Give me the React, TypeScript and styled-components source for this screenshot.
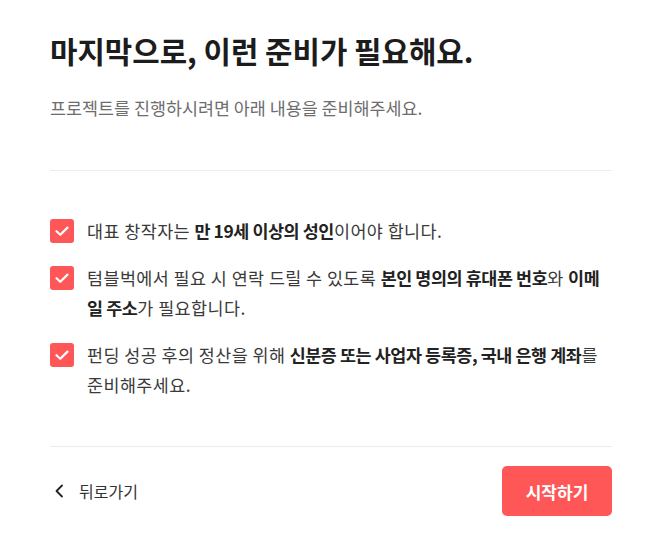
import React from 'react';
import styled, { createGlobalStyle } from 'styled-components';

const GlobalStyle = createGlobalStyle`
  body {
    margin: 0;
    background: #fff;
    font-family: 'Noto Sans CJK KR', 'Noto Sans', sans-serif;
    color: #333;
  }
`;

interface IRequirement {
  parts: { text: string; bold?: boolean }[];
}

const requirements: IRequirement[] = [
  {
    parts: [
      { text: '대표 창작자는 ' },
      { text: '만 19세 이상의 성인', bold: true },
      { text: '이어야 합니다.' },
    ],
  },
  {
    parts: [
      { text: '텀블벅에서 필요 시 연락 드릴 수 있도록 ' },
      { text: '본인 명의의 휴대폰 번호', bold: true },
      { text: '와 ' },
      { text: '이메일 주소', bold: true },
      { text: '가 필요합니다.' },
    ],
  },
  {
    parts: [
      { text: '펀딩 성공 후의 정산을 위해 ' },
      { text: '신분증 또는 사업자 등록증, 국내 은행 계좌', bold: true },
      { text: '를 준비해주세요.' },
    ],
  },
];

function CheckIcon() {
  return (
    <svg width='24' height='24' viewBox='0 0 24 24' fill='none'>
      <path d='M6.5 12.2L10.3 15.8L17.5 8.6' stroke='#fff' strokeWidth='2.2' strokeLinecap='round' strokeLinejoin='round' />
    </svg>
  );
}

function ChevronLeft() {
  return (
    <svg width='16' height='16' viewBox='0 0 16 16' fill='none'>
      <path d='M10 2.5L4.5 8L10 13.5' stroke='#222' strokeWidth='1.8' strokeLinecap='round' strokeLinejoin='round' />
    </svg>
  );
}

export default function App() {
  return (
    <>
      <GlobalStyle />
      <Wrapper>
        <Header>
          <Title>마지막으로, 이런 준비가 필요해요.</Title>
          <Description>프로젝트를 진행하시려면 아래 내용을 준비해주세요.</Description>
        </Header>
        <List>
          {requirements.map((item, i) => (
            <Item key={i}>
              <CheckBox>
                <CheckIcon />
              </CheckBox>
              <ItemText>
                {item.parts.map((p, j) => (p.bold ? <strong key={j}>{p.text}</strong> : <span key={j}>{p.text}</span>))}
              </ItemText>
            </Item>
          ))}
        </List>
        <Footer>
          <BackButton>
            <ChevronLeft />
            뒤로가기
          </BackButton>
          <StartButton>시작하기</StartButton>
        </Footer>
      </Wrapper>
    </>
  );
}

const Wrapper = styled.div`
  width: 562px;
  margin-left: 50px;
  padding-top: 30px;
`;

const Header = styled.div`
  padding-bottom: 50px;
  border-bottom: 1px solid #ececec;
`;

const Title = styled.h1`
  margin: 0;
  font-size: 29.8px;
  line-height: 40px;
  font-weight: 700;
  color: #1c1c1c;
`;

const Description = styled.p`
  margin: 26px 0 0;
  font-size: 17.4px;
  line-height: 24px;
  color: #6d6d6d;
`;

const List = styled.div`
  display: flex;
  flex-direction: column;
  gap: 17px;
  padding: 45px 0 46px;
  border-bottom: 1px solid #ececec;
`;

const Item = styled.div`
  display: flex;
  align-items: flex-start;
  gap: 13px;
`;

const CheckBox = styled.div`
  flex: none;
  width: 24px;
  height: 24px;
  margin-top: 3px;
  border-radius: 3px;
  background: #ff5757;
  display: flex;
  align-items: center;
  justify-content: center;
`;

const ItemText = styled.p`
  margin: 0;
  font-size: 17.4px;
  line-height: 30px;
  letter-spacing: 0.45px;
  color: #3a3a3a;

  strong {
    font-weight: 700;
    letter-spacing: -0.4px;
    color: #222;
  }
`;

const Footer = styled.div`
  display: flex;
  justify-content: space-between;
  align-items: center;
  padding-top: 19px;
`;

const BackButton = styled.button`
  display: flex;
  align-items: center;
  gap: 11px;
  padding: 0 0 0 2px;
  border: none;
  background: none;
  font-family: inherit;
  font-size: 16px;
  color: #333;
  cursor: pointer;
`;

const StartButton = styled.button`
  width: 110px;
  height: 50px;
  border: none;
  border-radius: 5px;
  background: #ff5757;
  color: #fff;
  font-family: inherit;
  font-size: 17px;
  font-weight: 700;
  cursor: pointer;
`;
